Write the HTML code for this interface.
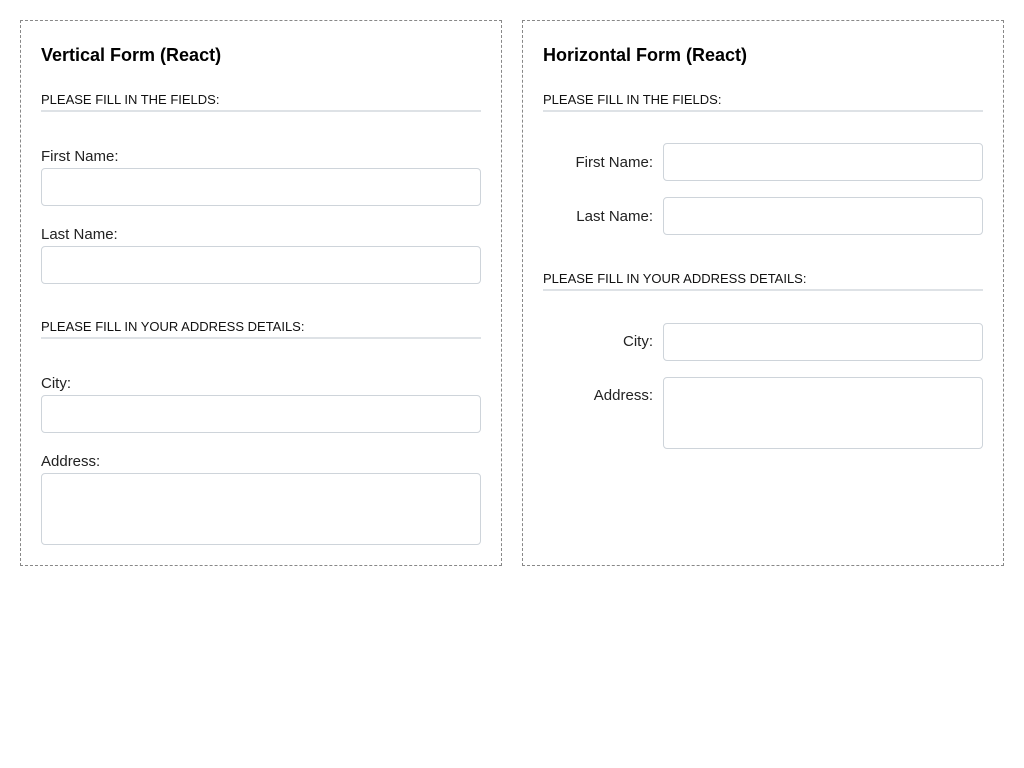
<!DOCTYPE html>
<html><head><meta charset="utf-8"><style>
*{box-sizing:border-box;margin:0;padding:0}
body{width:1024px;height:768px;background:#fff;font-family:"Liberation Sans",Arial,sans-serif;color:#212529;position:relative;overflow:hidden}
.box{position:absolute;top:20px;width:482px;height:546px;border:1px dashed #888}
.a{position:absolute;white-space:nowrap}
.t{font-weight:bold;font-size:18px;color:#000;height:20px;line-height:20px}
.h{font-size:13px;color:#111;height:16px;line-height:16px}
.ln{position:absolute;height:2px;background:#dee2e6}
.l{font-size:15px;height:18px;line-height:18px;color:#222}
.i{position:absolute;border:1px solid #ced4da;border-radius:4px;background:#fff}
</style></head><body>
<div class="box" style="left:20px"></div>
<div class="box" style="left:522px"></div>

<div class="a t" style="left:41px;top:45px">Vertical Form (React)</div>
<div class="a h" style="left:41px;top:92px">PLEASE FILL IN THE FIELDS:</div>
<div class="ln" style="left:41px;top:110px;width:440px"></div>
<div class="a l" style="left:41px;top:148px">First Name:</div>
<div class="i" style="left:41px;top:168px;width:440px;height:38px"></div>
<div class="a l" style="left:41px;top:226px">Last Name:</div>
<div class="i" style="left:41px;top:246px;width:440px;height:38px"></div>
<div class="a h" style="left:41px;top:319px">PLEASE FILL IN YOUR ADDRESS DETAILS:</div>
<div class="ln" style="left:41px;top:337px;width:440px"></div>
<div class="a l" style="left:41px;top:375px">City:</div>
<div class="i" style="left:41px;top:395px;width:440px;height:38px"></div>
<div class="a l" style="left:41px;top:453px">Address:</div>
<div class="i" style="left:41px;top:473px;width:440px;height:72px"></div>

<div class="a t" style="left:543px;top:45px">Horizontal Form (React)</div>
<div class="a h" style="left:543px;top:92px">PLEASE FILL IN THE FIELDS:</div>
<div class="ln" style="left:543px;top:110px;width:440px"></div>
<div class="a l" style="right:371px;top:154px">First Name:</div>
<div class="i" style="left:663px;top:143px;width:320px;height:38px"></div>
<div class="a l" style="right:371px;top:208px">Last Name:</div>
<div class="i" style="left:663px;top:197px;width:320px;height:38px"></div>
<div class="a h" style="left:543px;top:271px">PLEASE FILL IN YOUR ADDRESS DETAILS:</div>
<div class="ln" style="left:543px;top:289px;width:440px"></div>
<div class="a l" style="right:371px;top:333px">City:</div>
<div class="i" style="left:663px;top:323px;width:320px;height:38px"></div>
<div class="a l" style="right:371px;top:387px">Address:</div>
<div class="i" style="left:663px;top:377px;width:320px;height:72px"></div>
</body></html>
